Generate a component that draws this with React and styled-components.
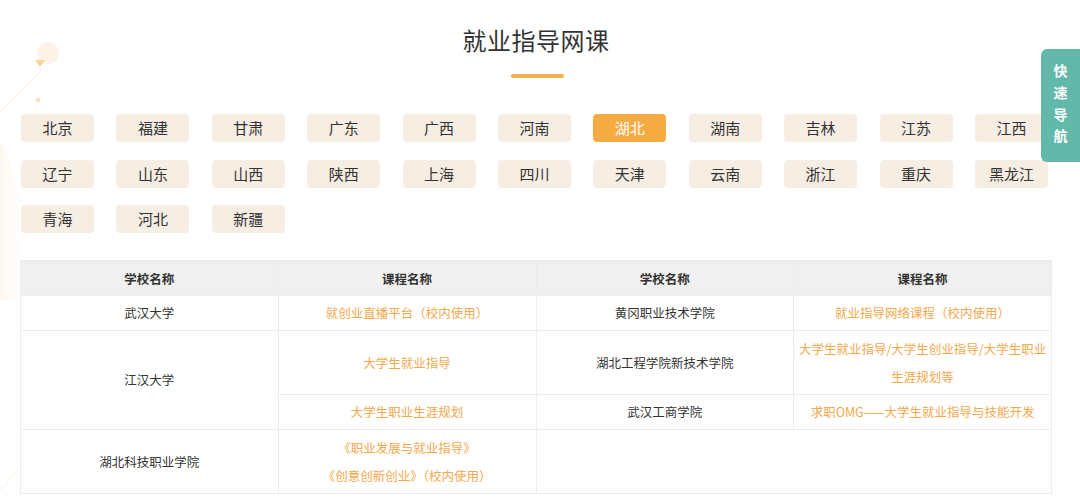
import React from "react";
import styled, { createGlobalStyle } from "styled-components";

const Global = createGlobalStyle`
  html, body { margin: 0; padding: 0; background: #fff; }
  body { font-family: "Noto Sans CJK SC", "Noto Sans", sans-serif; color: #333; }
  * { box-sizing: border-box; }
`;

const Page = styled.div`
  position: relative;
  width: 1080px;
  height: 503px;
  overflow: hidden;
  background: #fff;
`;

const Deco = styled.svg`
  position: absolute;
  left: 0;
  top: 0;
  pointer-events: none;
`;

const Content = styled.div`
  position: relative;
  padding: 0 28px 0 20px;
  display: flex;
  flex-direction: column;
  align-items: stretch;
`;

const Title = styled.h1`
  margin: 24px 0 0;
  font-size: 24px;
  font-weight: 400;
  line-height: 32px;
  text-align: center;
  color: #333;
  letter-spacing: 0.5px;
`;

const Bar = styled.div`
  align-self: center;
  width: 53px;
  height: 4px;
  border-radius: 2px;
  background: #f1b24f;
  margin: 18px 0 0 2px;
`;

const Grid = styled.div`
  display: grid;
  grid-template-columns: repeat(11, 73px);
  column-gap: 22.4px;
  row-gap: 17.5px;
  margin: 36px 0 0 1px;
`;

const Chip = styled.div`
  height: 28px;
  border-radius: 4px;
  background: ${(p) => (p.$active ? "#f5aa42" : "#f6ede3")};
  color: ${(p) => (p.$active ? "#fff" : "#333")};
  font-size: 15px;
  line-height: 28px;
  text-align: center;
`;

const Table = styled.table`
  margin-top: 27px;
  width: 1032px;
  border-collapse: collapse;
  table-layout: fixed;
  font-size: 12.5px;
`;

const Th = styled.th`
  height: 35px;
  background: #f0f0f0;
  font-weight: 700;
  color: #333;
  border: 1px solid #ececec;
  padding: 0;
`;

const Td = styled.td`
  height: ${(p) => p.$h || 35}px;
  border: 1px solid #ececec;
  text-align: center;
  vertical-align: middle;
  padding: 0 4px;
  line-height: 28px;
  color: ${(p) => (p.$link ? "#f2a84c" : "#333")};
`;

const Nav = styled.div`
  position: fixed;
  right: 0;
  top: 49px;
  width: 39px;
  height: 113px;
  border-radius: 6px 0 0 6px;
  background: #62b9a9;
  color: #fff;
  font-size: 14px;
  font-weight: 700;
  display: flex;
  flex-direction: column;
  align-items: center;
  padding-top: 11px;
  line-height: 21.8px;
`;

const provinces = [
  "北京", "福建", "甘肃", "广东", "广西", "河南", "湖北", "湖南", "吉林", "江苏", "江西",
  "辽宁", "山东", "山西", "陕西", "上海", "四川", "天津", "云南", "浙江", "重庆", "黑龙江",
  "青海", "河北", "新疆",
];

export default function App() {
  return (
    <Page>
      <Global />
      <Deco width="120" height="503" viewBox="0 0 120 503">
        <defs>
          <linearGradient id="g1" x1="0" y1="0" x2="1" y2="0">
            <stop offset="0" stopColor="#fdf7f0" stopOpacity="1" />
            <stop offset="1" stopColor="#fdf7f0" stopOpacity="0" />
          </linearGradient>
        </defs>
        <path d="M0 140 Q30 200 22 300 L0 300 Z" fill="url(#g1)" />
        <circle cx="48" cy="53" r="11" fill="#fdf3e7" />
        <path d="M35 60 L45 60 L40 67 Z" fill="#f8d49a" />
        <circle cx="38" cy="100" r="2.5" fill="#fbe2c2" />
        <line x1="44" y1="68" x2="0" y2="112" stroke="#fcefe0" strokeWidth="1" />
        <line x1="18" y1="470" x2="0" y2="490" stroke="#fbeee0" strokeWidth="1" />
      </Deco>
      <Content>
        <Title>就业指导网课</Title>
        <Bar />
        <Grid>
          {provinces.map((p) => (
            <Chip key={p} $active={p === "湖北"}>{p}</Chip>
          ))}
        </Grid>
        <Table>
          <thead>
            <tr>
              <Th>学校名称</Th>
              <Th>课程名称</Th>
              <Th>学校名称</Th>
              <Th>课程名称</Th>
            </tr>
          </thead>
          <tbody>
            <tr>
              <Td>武汉大学</Td>
              <Td $link>就创业直播平台（校内使用）</Td>
              <Td>黄冈职业技术学院</Td>
              <Td $link>就业指导网络课程（校内使用）</Td>
            </tr>
            <tr>
              <Td rowSpan={2}>江汉大学</Td>
              <Td $link $h={64}>大学生就业指导</Td>
              <Td $h={64}>湖北工程学院新技术学院</Td>
              <Td $link $h={64}>大学生就业指导/大学生创业指导/大学生职业生涯规划等</Td>
            </tr>
            <tr>
              <Td $link>大学生职业生涯规划</Td>
              <Td>武汉工商学院</Td>
              <Td $link>求职OMG——大学生就业指导与技能开发</Td>
            </tr>
            <tr>
              <Td $h={64}>湖北科技职业学院</Td>
              <Td $link $h={64}>
                《职业发展与就业指导》
                <br />
                《创意创新创业》（校内使用）
              </Td>
              <Td colSpan={2} $h={64}></Td>
            </tr>
          </tbody>
        </Table>
      </Content>
      <Nav>
        <span>快</span>
        <span>速</span>
        <span>导</span>
        <span>航</span>
      </Nav>
    </Page>
  );
}
